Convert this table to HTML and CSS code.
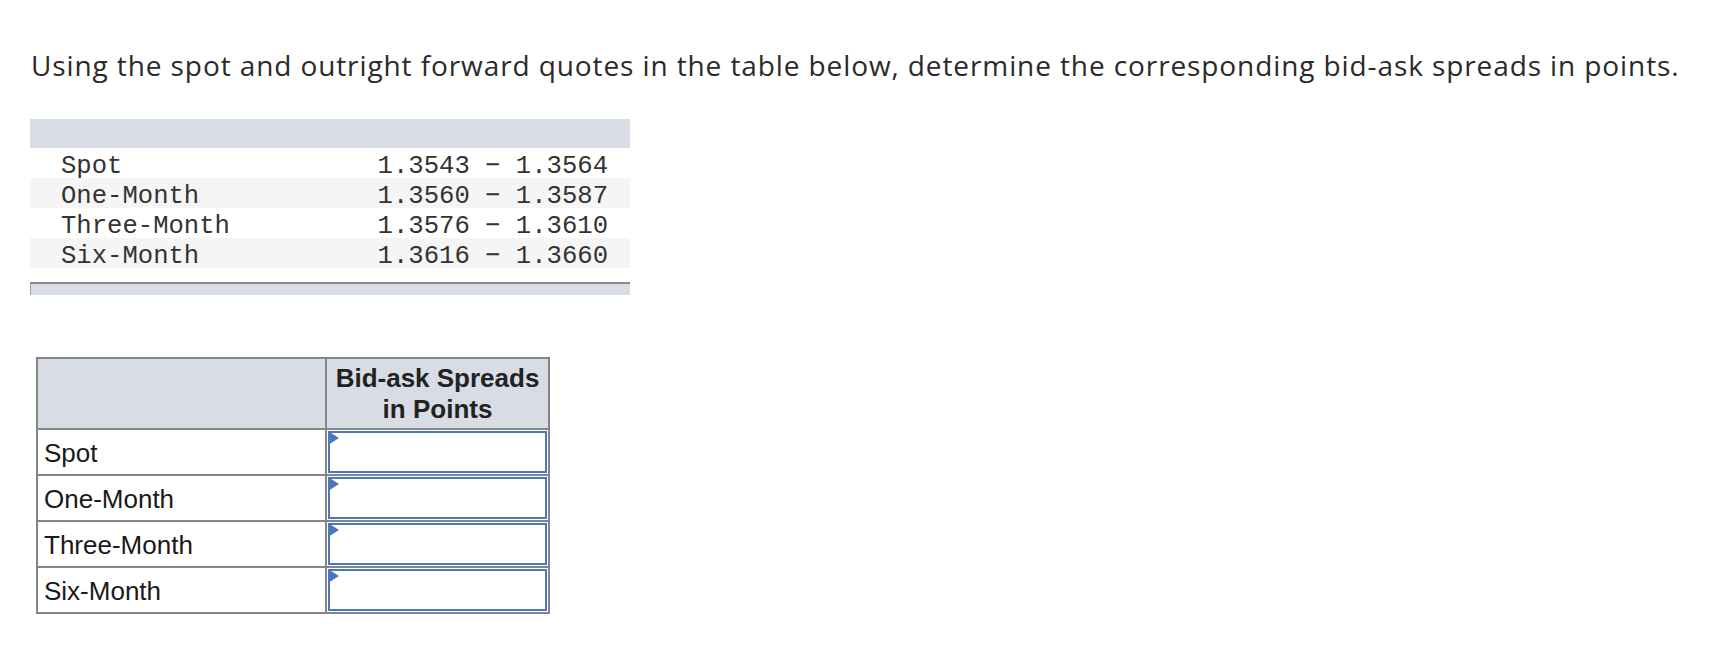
FILE: index.html
```html
<!DOCTYPE html>
<html>
<head>
<meta charset="utf-8">
<link rel="stylesheet" href="styles.css">
</head>
<body>
<p class="prompt">Using the spot and outright forward quotes in the table below, determine the corresponding bid-ask spreads in points.</p>

<div class="quotes">
  <div class="qhead"></div>
  <div class="qrow"><span>Spot</span><span>1.3543 &minus; 1.3564</span></div>
  <div class="qrow alt"><span>One-Month</span><span>1.3560 &minus; 1.3587</span></div>
  <div class="qrow"><span>Three-Month</span><span>1.3576 &minus; 1.3610</span></div>
  <div class="qrow alt"><span>Six-Month</span><span>1.3616 &minus; 1.3660</span></div>
  <div class="qfoot"></div>
</div>

<div class="answers">
  <div class="hcell"></div>
  <div class="hcell title">Bid-ask Spreads<br>in Points</div>
  <div class="lcell">Spot</div>
  <div class="icell"><div class="inp"></div></div>
  <div class="lcell">One-Month</div>
  <div class="icell"><div class="inp"></div></div>
  <div class="lcell">Three-Month</div>
  <div class="icell"><div class="inp"></div></div>
  <div class="lcell">Six-Month</div>
  <div class="icell"><div class="inp"></div></div>
</div>
</body>
</html>
```

FILE: styles.css
```css
body {
  margin: 0;
  background: #ffffff;
  color: #222222;
}

.prompt {
  margin: 49px 0 0 31px;
  font-family: "Open Sans", "Lato", sans-serif;
  font-size: 28px;
  letter-spacing: 0.9px;
  line-height: 32px;
  color: #2a2a2a;
  white-space: nowrap;
}

.quotes {
  margin: 38px 0 0 30px;
  width: 600px;
  font-family: "Liberation Mono", "Courier New", monospace;
  font-size: 25.6px;
  color: #333333;
}

.qhead {
  height: 29px;
  background: #d7dce5;
}

.qrow {
  height: 30px;
  box-sizing: border-box;
  padding: 6px 22px 0 31px;
  line-height: 26px;
  display: flex;
  justify-content: space-between;
  white-space: pre;
}

.qrow.alt {
  background: #f5f5f5;
}

.qfoot {
  margin-top: 14px;
  height: 11px;
  background: #d7dce5;
  border-top: 2px solid #8a8a8a;
  border-left: 1px solid #a0a0a0;
}

.answers {
  margin: 62px 0 0 36px;
  display: grid;
  grid-template-columns: 287px 221px;
  grid-template-rows: 69px repeat(4, 44px);
  gap: 2px;
  padding: 2px;
  width: max-content;
  background: #858585;
  font-family: "Liberation Sans", Arial, sans-serif;
  font-size: 26px;
  color: #1a1a1a;
}

.hcell {
  background: #d8dce5;
}

.hcell.title {
  display: flex;
  align-items: center;
  justify-content: center;
  text-align: center;
  font-weight: bold;
  line-height: 31px;
  color: #222222;
}

.lcell {
  background: #ffffff;
  display: flex;
  align-items: center;
  padding: 2px 0 0 6px;
}

.icell {
  background: #ffffff;
  padding: 1px;
  display: flex;
}

.inp {
  flex: 1;
  position: relative;
  border: 2px solid #4a77bd;
  background: #ffffff;
}

.inp::before {
  content: "";
  position: absolute;
  left: -2px;
  top: -2px;
  width: 0;
  height: 0;
  border-top: 7px solid transparent;
  border-bottom: 7px solid transparent;
  border-left: 11px solid #4a77bd;
}
```
